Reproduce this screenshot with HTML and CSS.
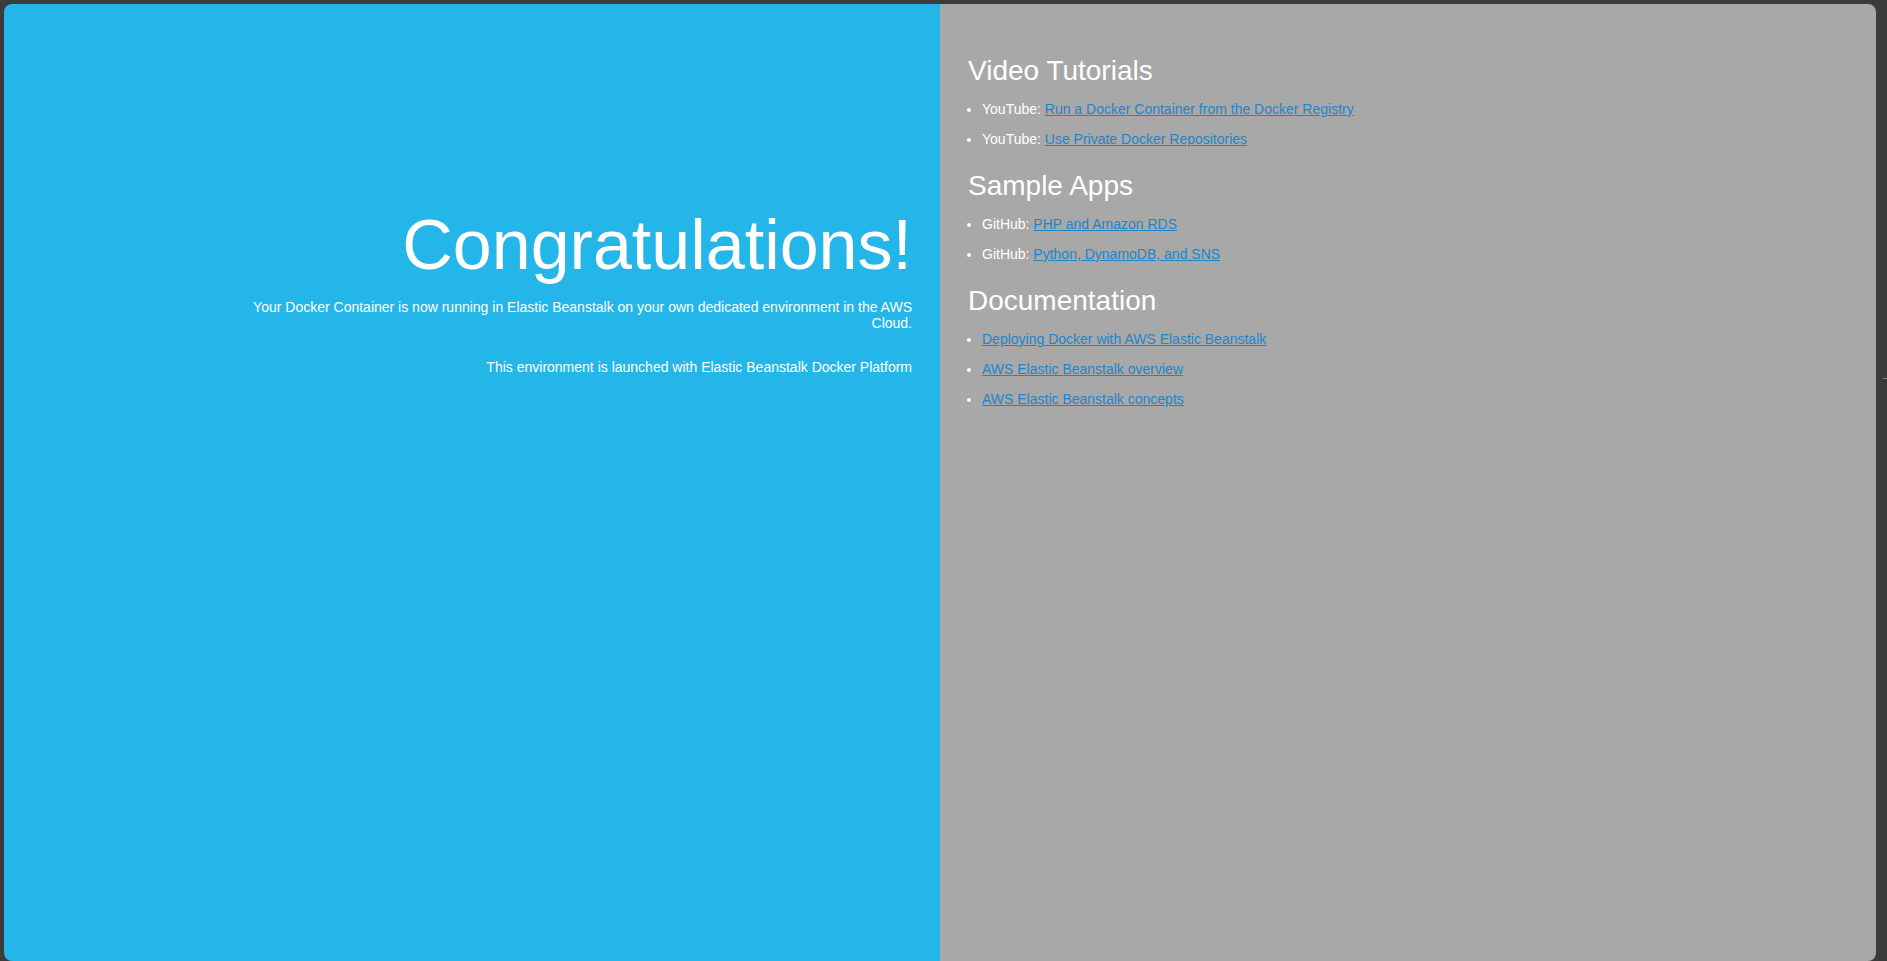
FILE: index.html
```html
<!DOCTYPE html>
<html lang="en">
<head>
<meta charset="utf-8">
<title>Elastic Beanstalk</title>
<link rel="stylesheet" href="styles.css">
</head>
<body>
<div class="frame">
  <div class="textColumn">
    <h1>Congratulations!</h1>
    <p>Your Docker Container is now running in Elastic Beanstalk on your own dedicated environment in the AWS Cloud.</p>
    <p>This environment is launched with Elastic Beanstalk Docker Platform</p>
  </div>
  <div class="linksColumn">
    <h2>Video Tutorials</h2>
    <ul>
      <li>YouTube: <a href="#">Run a Docker Container from the Docker Registry</a></li>
      <li>YouTube: <a href="#">Use Private Docker Repositories</a></li>
    </ul>
    <h2>Sample Apps</h2>
    <ul>
      <li>GitHub: <a href="#">PHP and Amazon RDS</a></li>
      <li>GitHub: <a href="#">Python, DynamoDB, and SNS</a></li>
    </ul>
    <h2>Documentation</h2>
    <ul>
      <li><a href="#">Deploying Docker with AWS Elastic Beanstalk</a></li>
      <li><a href="#">AWS Elastic Beanstalk overview</a></li>
      <li><a href="#">AWS Elastic Beanstalk concepts</a></li>
    </ul>
  </div>
</div>
<span class="tick"></span>
</body>
</html>
```
FILE: styles.css
```css
html, body {
  margin: 0;
  height: 961px;
  overflow: hidden;
}
body {
  background: #3b3b3b;
  padding: 4px 11px 0 4px;
  box-sizing: border-box;
  color: #ffffff;
  font-family: "Liberation Sans", Arial, sans-serif;
  font-size: 14px;
  position: relative;
}
.frame {
  display: flex;
  height: 957px;
  border-radius: 8px;
  overflow: hidden;
}
.textColumn, .linksColumn {
  flex: 1 1 0;
  padding: 28px;
  box-sizing: border-box;
}
.textColumn {
  background: #24b6e9;
  padding-top: 154px;
  text-align: right;
  display: flex;
  flex-direction: column;
  align-items: flex-end;
}
.textColumn h1 {
  font-size: 70px;
  font-weight: normal;
  margin: 47px 0 0;
}
.textColumn p {
  width: 75%;
  margin: 14px 0;
}
.linksColumn {
  background: #a8a8a8;
}
.linksColumn h2 {
  font-size: 28px;
  font-weight: normal;
  margin: 23px 0 0;
}
.linksColumn ul {
  padding-left: 14px;
  margin: 14px 0;
}
.linksColumn li {
  margin: 14px 0;
}
a {
  color: #1d85ca;
}
.tick {
  position: absolute;
  left: 1883px;
  top: 378px;
  width: 4px;
  height: 1px;
  background: #8c8c8c;
}
```
